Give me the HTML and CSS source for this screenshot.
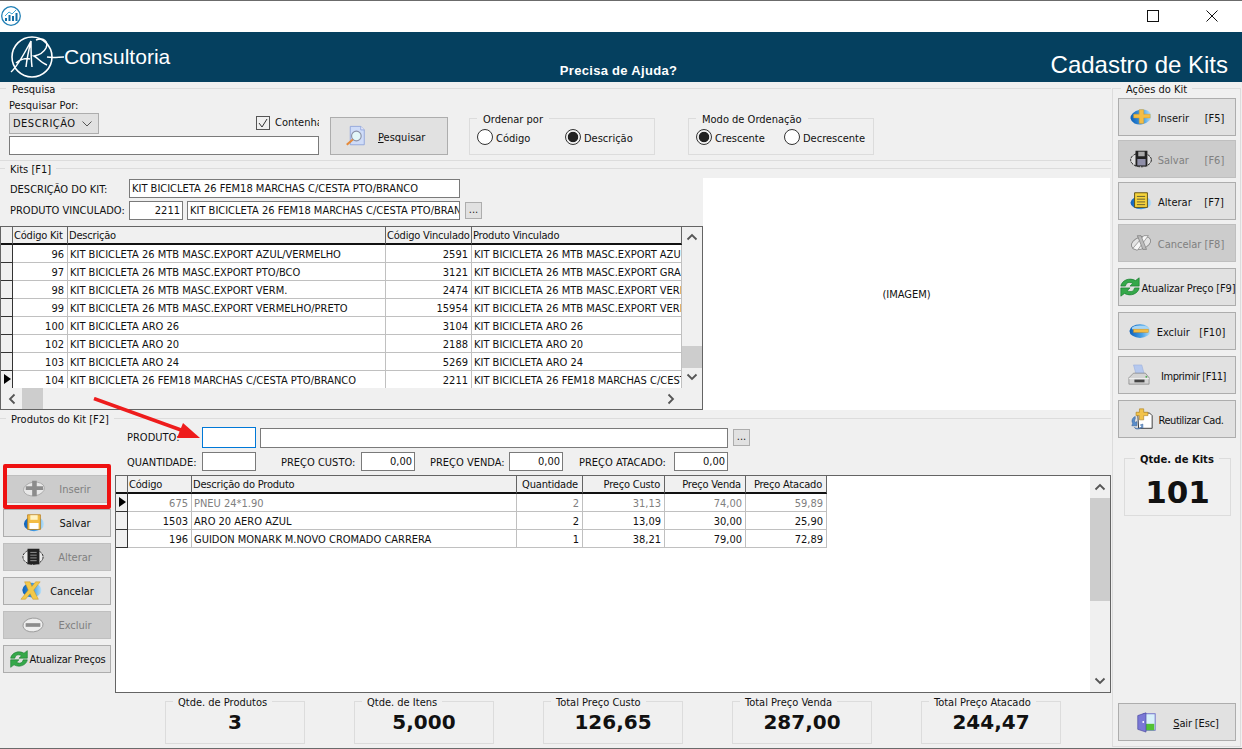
FILE: index.html
```html
<!DOCTYPE html>
<html lang="pt-BR">
<head>
<meta charset="utf-8">
<title>Cadastro de Kits</title>
<link rel="stylesheet" href="styles.css">
</head>
<body>
<svg class="defs" width="0" height="0">
  <defs>
    <linearGradient id="blue" x1="0" y1="0" x2="1" y2="0"><stop offset="0" stop-color="#0b5fb8"/><stop offset="0.6" stop-color="#4aa3e8"/><stop offset="1" stop-color="#bfe2f7"/></linearGradient>
    <symbol id="i-plus" viewBox="0 0 24 24"><ellipse cx="12" cy="12" rx="11.500" ry="8" fill="url(#blue)" transform="rotate(-10 12 12)"/><path d="M10 4h5v5h7v4h-7v6h-5v-6H4V9h6z" fill="#f3bd45" stroke="#d69a24" stroke-width=".5"/></symbol>
    <symbol id="i-plus-off" viewBox="0 0 24 24"><ellipse cx="12" cy="12" rx="11.500" ry="7.500" fill="#e8e8e8" stroke="#aaa" transform="rotate(-8 12 12)"/><path d="M10 3h5v6h7v4h-7v7h-5v-7H3V9h7z" fill="#8c8c8c"/></symbol>
    <symbol id="i-minus" viewBox="0 0 24 24"><ellipse cx="12" cy="12" rx="11.500" ry="7.500" fill="url(#blue)"/><ellipse cx="12" cy="9" rx="9" ry="3" fill="#a8d6f5"/><rect x="5" y="10" width="16" height="3.500" fill="#f3bd45" stroke="#c98d1c" stroke-width=".5"/></symbol>
    <symbol id="i-minus-off" viewBox="0 0 24 24"><ellipse cx="12" cy="12" rx="11" ry="7.500" fill="#eee" stroke="#999" transform="rotate(-6 12 12)"/><rect x="4" y="10" width="16" height="4" fill="#8c8c8c"/></symbol>
    <symbol id="i-save" viewBox="0 0 24 24"><ellipse cx="12" cy="13" rx="11" ry="8" fill="url(#blue)"/><path d="M5 3h14v16H5z" fill="#f3bd45" stroke="#b3791a" stroke-width=".8"/><rect x="8" y="3.500" width="8" height="5" fill="#fff3c4"/><rect x="7" y="12" width="10" height="6.500" fill="#fff"/></symbol>
    <symbol id="i-save-off" viewBox="0 0 24 24"><ellipse cx="12" cy="13" rx="11.300" ry="7.500" fill="#ddd" stroke="#111" stroke-dasharray="3 1"/><path d="M6 3h13v17H6z" fill="#222"/><rect x="9" y="4" width="7" height="5" fill="#aaa"/><rect x="8" y="12" width="9" height="7" fill="#8f8fa8"/></symbol>
    <symbol id="i-edit" viewBox="0 0 24 24"><ellipse cx="12" cy="14" rx="11.500" ry="7" fill="url(#blue)"/><path d="M5 3h14v16H5z" fill="#f6d43c" stroke="#5c4c0c"/><path d="M7.500 7h9M7.500 10h9M7.500 13h9M7.500 16h9" stroke="#4a4a30" stroke-width=".9"/></symbol>
    <symbol id="i-edit-off" viewBox="0 0 24 24"><ellipse cx="12" cy="12" rx="11" ry="8" fill="#e8e8e8" stroke="#222" stroke-dasharray="3 1"/><path d="M6 3h13v17H6z" fill="#222"/><path d="M9 7h7M9 10h7M9 13h7M9 16h7" stroke="#999"/></symbol>
    <symbol id="i-x" viewBox="0 0 24 24"><ellipse cx="13" cy="11" rx="10.500" ry="8" fill="url(#blue)"/><path d="M5 2h6l2 5 4-5h5l-7 9 5 10h-6l-3-6-5 6H1l8-10z" fill="#f3c94a" stroke="#c98d1c" stroke-width=".5"/></symbol>
    <symbol id="i-x-off" viewBox="0 0 24 24"><ellipse cx="12" cy="12" rx="11" ry="6.500" fill="#e4e4e4" stroke="#8a8a8a" transform="rotate(-20 12 12)"/><path d="M3 18L15 4h5L8 20z" fill="#f7f7f7" stroke="#777" stroke-width=".7"/><path d="M8 4h4l6 15h-4z" fill="#bbb" stroke="#666" stroke-width=".6"/></symbol>
    <symbol id="i-sync" viewBox="0 0 24 24"><path d="M2 11C3 5 11 1 18 5l4-3v9H12l3-3c-4-2-7-1-8 3z" fill="#35a84a" stroke="#147a2c" stroke-width=".7"/><path d="M22 13c-1 6-9 10-16 6l-4 3v-9h10l-3 3c4 2 7 1 8-3z" fill="#35a84a" stroke="#147a2c" stroke-width=".7"/></symbol>
    <symbol id="i-print" viewBox="0 0 24 24"><path d="M6 1h9l3 11H9z" fill="#b5c8ee" stroke="#8fa4d8" stroke-width=".5"/><path d="M1 15l5-5h13l4 5v7H1z" fill="#d4d4d4" stroke="#777" stroke-width=".7"/><path d="M1 16h22" stroke="#f5f5f5"/><rect x="7" y="17" width="11" height="3" fill="#444"/><circle cx="20" cy="14" r="1" fill="#4a4"/></symbol>
    <symbol id="i-reuse" viewBox="0 0 26 26"><path d="M8 6h14l3 3v15H9z" fill="#fff" stroke="#222" stroke-width="1"/><path d="M10 1h5v4h5v4h-5v5h-5V9H6V5h4z" fill="#f2c34b" stroke="#a97a17" stroke-width=".7"/><path d="M2 18c-2-3 0-7 3-8v3c-1 1-1 3 0 4l2-1v5H1z" fill="#5b8ecb" stroke="#2e5a94" stroke-width=".6"/><path d="M4 23c3 2 7 1 9-1l-2-2 3-1v5l-1-1c-3 2-7 3-9 0z" fill="#7aa7da" stroke="#2e5a94" stroke-width=".6"/></symbol>
    <symbol id="i-door" viewBox="0 0 24 24"><rect x="9" y="3" width="13" height="18" fill="#d8f0fa" stroke="#6c6cc8"/><rect x="10" y="14" width="11" height="7" fill="#52c234"/><path d="M3 5l9-3v21l-9-3z" fill="#7a78d6" stroke="#47459c" stroke-width=".7"/><circle cx="9" cy="12" r="1" fill="#fff"/></symbol>
    <symbol id="i-find" viewBox="0 0 24 24"><path d="M6 1h12l4 4v17H6z" fill="#cfdcf8" stroke="#8ea4da"/><path d="M18 1v4h4" fill="#eef" stroke="#8ea4da"/><circle cx="13" cy="12" r="5.500" fill="#e3f6f8" stroke="#8a90a6" stroke-width="1.300"/><path d="M9 16l-7 6" stroke="#e58a3a" stroke-width="2.500"/></symbol>
  </defs>
</svg>

<div class="window">
  <header class="titlebar">
    <svg class="app-icon" viewBox="0 0 20 20"><circle cx="10" cy="10" r="9.300" fill="#fff" stroke="#1f7fb5" stroke-width="1.300"/><path d="M4 15h2v-3H4zM7.500 15h2V9h-2zM11 15h2v-5h-2zM14.500 15h2V7h-2z" fill="#136ea6"/><path d="M4 10l4-4 3 2 4-4" fill="none" stroke="#3fa7d6" stroke-width="1"/></svg>
    <div class="win-controls">
      <span class="win-max"></span>
      <svg class="win-close" viewBox="0 0 12 12"><path d="M.5.500l11 11M11.500.500l-11 11" stroke="#111" stroke-width="1"/></svg>
    </div>
  </header>

  <div class="banner">
    <div class="brand">
      <svg class="logo" viewBox="0 0 56 46"><circle cx="23" cy="23" r="20" fill="none" stroke="#fff" stroke-width="1.600"/><path d="M2 38C9 32 16 18 22 7c-2 8-4 17-5 26M7 29c4-4 10-5 14-4M22 7c0 8 0 18 1 26" fill="none" stroke="#fff" stroke-width="1.500"/><path d="M27 6c7-3 13 1 10 8-2 4-7 7-12 8 4 2 7 7 13 9M38 23c6 1 12 0 17 0" fill="none" stroke="#fff" stroke-width="1.500"/></svg>
      <span class="brand-name">Consultoria</span>
    </div>
    <div class="help">Precisa de Ajuda?</div>
    <div class="page-title">Cadastro de Kits</div>
  </div>

  <div class="content">
    <main class="main">
      <fieldset class="section">
        <legend>Pesquisa</legend>
        <div class="search">
          <div class="search-fields">
            <div class="field-label">Pesquisar Por:</div>
            <div class="search-mid">
              <div class="select">DESCRIÇÃO<svg viewBox="0 0 10 6"><path d="M.5.500L5 5 9.500.500" fill="none" stroke="#555"/></svg></div>
              <label class="check"><span class="box"><svg viewBox="0 0 12 12"><path d="M2 6l3 4 5-8" fill="none" stroke="#333"/></svg></span><span class="check-text">Contenha</span></label>
            </div>
            <div class="input search-input"></div>
          </div>
          <button class="btn find"><svg class="ic ic-find"><use href="#i-find"/></svg><span class="lower"><u>P</u>esquisar</span></button>
          <fieldset class="opt opt-order">
            <legend>Ordenar por</legend>
            <div class="radios">
              <span class="radio-item ri-1"><i class="radio"></i>Código</span>
              <span class="radio-item"><i class="radio on"></i>Descrição</span>
            </div>
          </fieldset>
          <fieldset class="opt opt-mode">
            <legend>Modo de Ordenação</legend>
            <div class="radios">
              <span class="radio-item ri-2"><i class="radio on"></i>Crescente</span>
              <span class="radio-item"><i class="radio"></i>Decrescente</span>
            </div>
          </fieldset>
        </div>
      </fieldset>

      <fieldset class="section section-kits">
        <legend class="lg-kits">Kits [F1]</legend>
        <div class="kits">
          <div class="kits-left">
            <div class="row r-desc">
              <span class="row-label">DESCRIÇÃO DO KIT:</span>
              <div class="input w-desc">KIT BICICLETA 26 FEM18 MARCHAS C/CESTA PTO/BRANCO</div>
            </div>
            <div class="row r-prod">
              <span class="row-label">PRODUTO VINCULADO:</span>
              <div class="input num w-code">2211</div>
              <div class="input w-name">KIT BICICLETA 26 FEM18 MARCHAS C/CESTA PTO/BRANCO</div>
              <button class="dots">...</button>
            </div>
            <div class="grid grid-kits">
              <div class="grid-main">
                <div class="grid-view">
                  <table class="t-kits">
                    <colgroup><col class="k0"><col class="k1"><col class="k2"><col class="k3"><col class="k4"></colgroup>
                    <thead><tr><th></th><th>Código Kit</th><th>Descrição</th><th>Código Vinculado</th><th>Produto Vinculado</th></tr></thead>
                    <tbody>
                      <tr><th></th><td class="n">96</td><td>KIT BICICLETA 26 MTB MASC.EXPORT AZUL/VERMELHO</td><td class="n">2591</td><td>KIT BICICLETA 26 MTB MASC.EXPORT AZUL/VERMELHO</td></tr>
                      <tr><th></th><td class="n">97</td><td>KIT BICICLETA 26 MTB MASC.EXPORT PTO/BCO</td><td class="n">3121</td><td>KIT BICICLETA 26 MTB MASC.EXPORT GRAFITE</td></tr>
                      <tr><th></th><td class="n">98</td><td>KIT BICICLETA 26 MTB MASC.EXPORT VERM.</td><td class="n">2474</td><td>KIT BICICLETA 26 MTB MASC.EXPORT VERM.</td></tr>
                      <tr><th></th><td class="n">99</td><td>KIT BICICLETA 26 MTB MASC.EXPORT VERMELHO/PRETO</td><td class="n">15954</td><td>KIT BICICLETA 26 MTB MASC.EXPORT VERMELHO</td></tr>
                      <tr><th></th><td class="n">100</td><td>KIT BICICLETA ARO 26</td><td class="n">3104</td><td>KIT BICICLETA ARO 26</td></tr>
                      <tr><th></th><td class="n">102</td><td>KIT BICICLETA ARO 20</td><td class="n">2188</td><td>KIT BICICLETA ARO 20</td></tr>
                      <tr><th></th><td class="n">103</td><td>KIT BICICLETA ARO 24</td><td class="n">5269</td><td>KIT BICICLETA ARO 24</td></tr>
                      <tr><th class="cur"></th><td class="n">104</td><td>KIT BICICLETA 26 FEM18 MARCHAS C/CESTA PTO/BRANCO</td><td class="n">2211</td><td>KIT BICICLETA 26 FEM18 MARCHAS C/CESTA PTO/BRANCO</td></tr>
                    </tbody>
                  </table>
                </div>
                <div class="hscroll">
                  <svg class="arr" viewBox="0 0 8 12"><path d="M6.500 1.500L2 6l4.500 4.500" fill="none" stroke="#555" stroke-width="1.800"/></svg>
                  <span class="h-thumb"></span>
                  <svg class="arr arr-r" viewBox="0 0 8 12"><path d="M1.500 1.500L6 6l-4.500 4.500" fill="none" stroke="#555" stroke-width="1.800"/></svg>
                </div>
              </div>
              <div class="vscroll vs-kits">
                <svg class="arr-v" viewBox="0 0 12 8"><path d="M1.500 6.500L6 2l4.500 4.500" fill="none" stroke="#555" stroke-width="1.800"/></svg>
                <span class="v-thumb"></span>
                <svg class="arr-v" viewBox="0 0 12 8"><path d="M1.500 1.500L6 6l4.500-4.500" fill="none" stroke="#555" stroke-width="1.800"/></svg>
              </div>
            </div>
          </div>
          <div class="image-box">(IMAGEM)</div>
        </div>
      </fieldset>

      <fieldset class="section section-prod">
        <legend class="lg-prod">Produtos do Kit [F2]</legend>
        <div class="prod-form">
          <div class="row r-p1">
            <span class="lb-prod">PRODUTO:</span>
            <div class="input focus w-qty"></div>
            <div class="input w-pname"></div>
            <button class="dots">...</button>
          </div>
          <div class="row r-p2">
            <span class="lb-prod">QUANTIDADE:</span>
            <div class="input w-qty"></div>
            <span class="lb-c1">PREÇO CUSTO:</span>
            <div class="input num w-qty">0,00</div>
            <span class="lb-c2">PREÇO VENDA:</span>
            <div class="input num w-qty">0,00</div>
            <span class="lb-c3">PREÇO ATACADO:</span>
            <div class="input num w-qty">0,00</div>
          </div>
        </div>
        <div class="prod-body">
          <div class="prod-actions">
            <button class="btn small off"><svg class="ic"><use href="#i-plus-off"/></svg><span class="t-ins">Inserir</span></button>
            <button class="btn small"><svg class="ic"><use href="#i-save"/></svg><span class="t-ins">Salvar</span></button>
            <button class="btn small off"><svg class="ic"><use href="#i-edit-off"/></svg><span class="t-ins">Alterar</span></button>
            <button class="btn small"><svg class="ic"><use href="#i-x"/></svg><span class="t-can">Cancelar</span></button>
            <button class="btn small off"><svg class="ic"><use href="#i-minus-off"/></svg><span class="t-ins">Excluir</span></button>
            <button class="btn small tight tight-p"><svg class="ic"><use href="#i-sync"/></svg><span>Atualizar Preços</span></button>
          </div>
          <div class="grid grid-prod">
            <div class="grid-view">
              <table class="t-prod">
                <colgroup><col class="p0"><col class="p1"><col class="p2"><col class="p3"><col class="p4"><col class="p5"><col class="p6"></colgroup>
                <thead><tr><th></th><th>Código</th><th>Descrição do Produto</th><th class="hc">Quantidade</th><th class="hr">Preço Custo</th><th class="hr">Preço Venda</th><th class="hr">Preço Atacado</th></tr></thead>
                <tbody>
                  <tr class="sel"><th class="cur"></th><td class="n">675</td><td>PNEU 24*1.90</td><td class="n">2</td><td class="n">31,13</td><td class="n">74,00</td><td class="n">59,89</td></tr>
                  <tr><th></th><td class="n">1503</td><td>ARO 20 AERO AZUL</td><td class="n">2</td><td class="n">13,09</td><td class="n">30,00</td><td class="n">25,90</td></tr>
                  <tr><th></th><td class="n">196</td><td>GUIDON MONARK M.NOVO CROMADO CARRERA</td><td class="n">1</td><td class="n">38,21</td><td class="n">79,00</td><td class="n">72,89</td></tr>
                </tbody>
              </table>
            </div>
            <div class="vscroll vs-prod">
              <svg class="arr-v" viewBox="0 0 12 8"><path d="M1.500 6.500L6 2l4.500 4.500" fill="none" stroke="#555" stroke-width="1.800"/></svg>
              <span class="v-thumb"></span>
              <svg class="arr-v" viewBox="0 0 12 8"><path d="M1.500 1.500L6 6l4.500-4.500" fill="none" stroke="#555" stroke-width="1.800"/></svg>
            </div>
          </div>
        </div>
        <div class="totals">
          <fieldset class="total"><legend>Qtde. de Produtos</legend><b>3</b></fieldset>
          <fieldset class="total"><legend>Qtde. de Itens</legend><b>5,000</b></fieldset>
          <fieldset class="total"><legend>Total Preço Custo</legend><b>126,65</b></fieldset>
          <fieldset class="total"><legend>Total Preço Venda</legend><b>287,00</b></fieldset>
          <fieldset class="total"><legend>Total Preço Atacado</legend><b>244,47</b></fieldset>
        </div>
      </fieldset>
    </main>

    <fieldset class="side">
      <legend>Ações do Kit</legend>
      <div class="side-stack">
        <button class="btn"><svg class="ic"><use href="#i-plus"/></svg><span class="pre">Inserir     [F5]</span></button>
        <button class="btn off"><svg class="ic"><use href="#i-save-off"/></svg><span class="pre">Salvar     [F6]</span></button>
        <button class="btn"><svg class="ic"><use href="#i-edit"/></svg><span class="pre">Alterar    [F7]</span></button>
        <button class="btn off"><svg class="ic"><use href="#i-x-off"/></svg><span class="pre">Cancelar [F8]</span></button>
        <button class="btn tight wide-gap"><svg class="ic"><use href="#i-sync"/></svg><span class="squeeze">Atualizar Preço [F9]</span></button>
        <button class="btn wide-gap"><svg class="ic"><use href="#i-minus"/></svg><span class="pre">Excluir   [F10]</span></button>
        <button class="btn wide-gap gap-10"><svg class="ic"><use href="#i-print"/></svg><span class="squeeze2">Imprimir [F11]</span></button>
        <button class="btn wide-gap"><svg class="ic"><use href="#i-reuse"/></svg><span class="squeeze2">Reutilizar Cad.</span></button>
        <fieldset class="count"><legend>Qtde. de Kits</legend><b>101</b></fieldset>
        <button class="btn exit"><svg class="ic"><use href="#i-door"/></svg><span class="squeeze"><u>S</u>air [Esc]</span></button>
      </div>
    </fieldset>
  </div>

  <div class="red-box"></div>
  <svg class="red-arrow" viewBox="0 0 112 44"><path d="M1 1.500L88 33" stroke="#ee1c1c" stroke-width="3.500" fill="none"/><path d="M107 41L90 26 84 41z" fill="#ee1c1c"/></svg>
</div>
</body>
</html>
```
FILE: styles.css
```css
* { box-sizing: border-box; }
html, body { margin: 0; padding: 0; }
body {
  font-family: "DejaVu Sans Condensed", "DejaVu Sans", sans-serif;
  font-stretch: condensed;
  font-size: 11px;
  color: #111;
  background: #f0f0f0;
}
.defs { position: absolute; }
u { text-decoration: underline; }

.window {
  position: relative;
  width: 1242px;
  height: 749px;
  display: flex;
  flex-direction: column;
  overflow: hidden;
  background: #f0f0f0;
  border-top: 1px solid #6b6b6b;
  border-bottom: 1px solid #6b6b6b;
}

/* Title bar */
.titlebar {
  height: 31px;
  flex: none;
  background: #fff;
  display: flex;
  align-items: center;
  justify-content: space-between;
  padding: 0 24px 1px 1px;
}
.app-icon { width: 20px; height: 20px; }
.win-controls { display: flex; align-items: center; gap: 47px; }
.win-max { width: 12px; height: 12px; border: 1px solid #111; }
.win-close { width: 12px; height: 12px; display: block; }

/* Banner */
.banner {
  height: 50px;
  flex: none;
  background: #05405f;
  color: #fff;
  display: grid;
  grid-template-columns: 1fr auto 1fr;
  padding: 0 14px 0 9px;
  font-family: "Liberation Sans", sans-serif;
  font-stretch: normal;
}
.brand { display: flex; align-items: center; }
.logo { width: 56px; height: 46px; flex: none; }
.brand-name { font-size: 21px; margin-left: -1px; margin-top: 0; }
.help { font-size: 13px; font-weight: bold; letter-spacing: .3px; align-self: end; padding-bottom: 4px; }
.page-title { font-size: 24px; justify-self: end; align-self: end; padding-bottom: 3px; }

/* Layout */
.content { flex: 1; display: flex; min-height: 0; }
.main { width: 1111px; flex: none; display: flex; flex-direction: column; }

fieldset { margin: 0; padding: 0; min-width: 0; border: 0; }
legend { padding: 0 6px; margin-left: 6px; line-height: 15px; height: 13px; }

.section { border-top: 1px solid #dcdcdc; border-bottom: 1px solid #dcdcdc; }
.section-kits { margin-top: 1px; border-bottom: 0; }
.section-prod { margin-top: 2px; border-bottom: 0; flex: 1; }
.lg-kits { margin-left: 5px; padding: 0 5px; }
.lg-prod { margin-left: 6px; padding: 0 5px; }

/* Search */
.search { display: flex; height: 65px; padding-left: 9px; }
.search-fields { width: 310px; flex: none; padding-top: 4px; }
.field-label { height: 13px; line-height: 13px; margin-bottom: 1px; }
.search-mid { display: flex; justify-content: space-between; height: 21px; }
.select {
  width: 90px; height: 21px;
  background: #e1e1e1; border: 1px solid #adadad;
  display: flex; align-items: center; justify-content: space-between;
  padding: 0 6px 0 3px;
  letter-spacing: .5px;
}
.select svg { width: 10px; height: 6px; }
.check { display: flex; align-items: center; height: 21px; margin-top: -1px; }
.box { width: 14px; height: 14px; border: 1px solid #555; background: #f0f0f0; margin-right: 5px; display: block; }
.box svg { width: 12px; height: 12px; display: block; }
.check-text { width: 44px; overflow: hidden; white-space: nowrap; }
.search-input { width: 310px; margin-top: 2px; }

.input {
  height: 19px;
  flex: none;
  background: #fff;
  border: 1px solid #7a7a7a;
  line-height: 18px;
  padding: 0 2px;
  white-space: nowrap;
  overflow: hidden;
}
.input.num { text-align: right; }
.input.focus { border-color: #0078d7; height: 21px; }

.btn {
  font: inherit;
  color: #111;
  width: 118px;
  height: 38px;
  flex: none;
  display: flex;
  align-items: center;
  justify-content: center;
  gap: 6px;
  padding: 0;
  background: #e1e1e1;
  border: 1px solid #adadad;
  white-space: nowrap;
}
.btn.off { background: #cccccc; border-color: #bfbfbf; color: #808080; }
.btn.tight { gap: 1px; }
.btn.small { width: 108px; height: 28px; }
.ic { width: 22px; height: 22px; flex: none; }
.pre { white-space: pre; }
.t-ins { margin-left: 8px; }
.t-can { margin-left: 2px; }
.lower { margin-top: 2px; }
.side .btn span { margin-top: 2px; }
.squeeze { letter-spacing: -.15px; }
.squeeze2 { letter-spacing: -.45px; }
.wide-gap { margin-top: 2px; }
.gap-10 { gap: 11px; }
.tight-p .ic { width: 20px; height: 20px; }
.tight-p { gap: 3px; }
.tight-p span { letter-spacing: -.2px; }

.find { margin: 22px 21px 0 11px; gap: 12px; justify-content: flex-start; padding-left: 14px; }
.ic-find { width: 21px; height: 24px; }

.opt { width: 186px; height: 43px; border: 1px solid #dcdcdc; margin-top: 17px; }
.opt-order { margin-right: 33px; }
.opt legend { margin-left: 7px; padding: 0 6px; }
.radios { display: flex; padding: 4px 0 0 7px; }
.radio-item { display: flex; align-items: center; gap: 3px; height: 18px; }
.ri-1 { width: 88px; }
.ri-2 { width: 88px; }
.radio {
  width: 16px; height: 16px; border-radius: 50%; margin-top: -2px;
  border: 1.300px solid #333; background: #fff; display: block; position: relative; flex: none;
}
.radio.on { background: radial-gradient(circle, #222 0 4.800px, #f0f0f0 5.600px); }

/* Kits */
.kits { display: flex; height: 235px; }
.kits-left { width: 703px; flex: none; padding-top: 4px; }
.row { display: flex; align-items: center; }
.row-label { margin-left: 10px; }
.r-desc { height: 19px; gap: 0; }
.r-desc .row-label { width: 119px; padding-top: 2px; }
.r-prod { height: 19px; margin-top: 3px; }
.r-prod .row-label { width: 119px; }
.w-desc { width: 331px; }
.w-code { width: 54px; }
.w-name { width: 273px; margin-left: 4px; }
.dots {
  font: inherit; width: 17px; height: 17px; padding: 0 0 4px; margin-left: 5px;
  background: #e1e1e1; border: 1px solid #adadad; color: #222; flex: none;
}
.image-box {
  width: 407px; margin-top: 3px; background: #fff;
  display: flex; align-items: center; justify-content: center;
}

/* Grids */
.grid { display: flex; background: #fff; border: 1px solid #646464; overflow: hidden; }
.grid-kits { margin-top: 6px; height: 184px; background: #f0f0f0; }
.grid-main { width: 681px; flex: none; display: flex; flex-direction: column; }
.grid-view { flex: 1; min-width: 0; overflow: hidden; background: #fff; }
.grid-kits .grid-view { flex: none; height: 161px; }
table { border-collapse: separate; border-spacing: 0; table-layout: fixed; white-space: nowrap; }
.t-kits { width: 681px; }
.t-prod { width: 711px; }
th, td { height: 18px; padding: 1px 0 0; font-weight: normal; overflow: hidden; }
td { padding: 1px 2px 0; border-right: 1px solid #c0c0c0; border-bottom: 1px solid #c0c0c0; }
td.n { text-align: right; padding-right: 3px; }
thead th {
  text-align: left; padding-left: 1px; background: #f0f0f0; letter-spacing: -.2px;
  border-right: 1px solid #646464; border-bottom: 2px solid #111;
}
tbody th { background: #f0f0f0; border-right: 1px solid #333; border-bottom: 1px solid #333; position: relative; }
th.cur::after {
  content: ""; position: absolute; left: 3px; top: 3px;
  border-left: 7px solid #000; border-top: 5.500px solid transparent; border-bottom: 5.500px solid transparent;
}
thead .hr { text-align: right; padding-right: 4px; }
thead .hc { text-align: center; }
.sel td { color: #808080; }
.k0 { width: 12px; } .k1 { width: 55px; } .k2 { width: 318px; } .k3 { width: 86px; } .k4 { width: 210px; }
.p0 { width: 12px; } .p1 { width: 64px; } .p2 { width: 325px; } .p3 { width: 66px; } .p4 { width: 82px; } .p5 { width: 81px; } .p6 { width: 81px; }

.hscroll { flex: 1; display: flex; align-items: center; background: #f0f0f0; padding-left: 7px; }
.arr { width: 8px; height: 12px; }
.arr-r { margin-left: auto; margin-right: 7px; }
.h-thumb { width: 21px; height: 100%; background: #cdcdcd; margin-left: 6px; }
.vscroll { width: 20px; flex: none; background: #f0f0f0; display: flex; flex-direction: column; align-items: center; }
.vs-kits { padding: 6px 0 7px; }
.vs-kits .v-thumb { width: 100%; height: 22px; background: #cdcdcd; margin: 105px 0 5px; }
.vs-prod { padding: 7px 0; }
.vs-prod .v-thumb { width: 100%; height: 103px; background: #cdcdcd; margin-top: 7px; margin-bottom: auto; }
.arr-v { width: 12px; height: 8px; flex: none; }

/* Products */
.prod-form { padding: 2px 0 0 127px; }
.r-p1 { height: 21px; }
.r-p2 { height: 19px; margin-top: 4px; }
.r-p2 > span { padding-top: 1px; }
.lb-prod { width: 75px; flex: none; }
.w-qty { width: 54px; }
.w-pname { width: 468px; height: 20px; margin-left: 4px; }
.lb-c1 { margin-left: 25px; width: 80px; }
.lb-c2 { margin-left: 15px; width: 79px; }
.lb-c3 { margin-left: 16px; width: 95px; }
.prod-body { display: flex; margin-top: 4px; }
.prod-actions { width: 115px; flex: none; padding-left: 3px; display: flex; flex-direction: column; gap: 6px; }
.grid-prod { width: 996px; height: 218px; }

.totals { display: flex; gap: 49px; padding-left: 165px; margin-top: 2px; }
.total { width: 140px; height: 49px; border: 1px solid #dcdcdc; text-align: center; }
.total legend { text-align: left; margin-left: 7px; padding: 0 5px; }
.total b, .count b { font-family: "DejaVu Sans", sans-serif; font-stretch: normal; font-weight: bold; display: block; }
.total b { font-size: 20px; line-height: 24px; margin-top: 2px; }

/* Side */
.side {
  width: 129px; flex: none; margin: 0 0 0 1px;
  border: 1px solid #dcdcdc;
  height: 665px;
}
.side > legend { margin-left: 8px; padding: 0 5px; }
.side-stack { display: flex; flex-direction: column; gap: 4px; padding: 3px 0 5px 5px; height: 651px; }
.count {
  width: 107px; height: 64px; margin: 10px 0 0 6px;
  border: 1px solid #dcdcdc; text-align: center;
}
.count legend {
  font-family: "DejaVu Sans", sans-serif; font-stretch: normal; font-weight: bold;
  font-size: 10px; margin-left: 10px; padding: 0 5px; text-align: left;
}
.count b { font-size: 31px; line-height: 36px; margin-top: 9px; }
.exit { margin-top: auto; gap: 16px; }

/* Annotations */
.red-box {
  position: absolute; left: 3px; top: 463px;
  width: 108px; height: 45px;
  border: 4px solid #ee1111; border-radius: 2px;
}
.red-arrow { position: absolute; left: 93px; top: 396px; width: 112px; height: 44px; }
```
